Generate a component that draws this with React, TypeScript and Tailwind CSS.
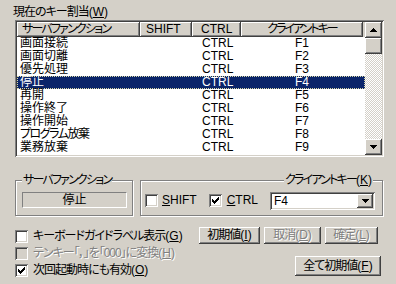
import React from "react";

const raised =
  "shadow-[inset_-1px_-1px_0_#404040,inset_1px_1px_0_#ffffff,inset_-2px_-2px_0_#808080,inset_2px_2px_0_#d4d0c8]";
const sunken =
  "shadow-[inset_1px_1px_0_#808080,inset_-1px_-1px_0_#ffffff,inset_2px_2px_0_#404040,inset_-2px_-2px_0_#d4d0c8]";
const etched = "border border-[#808080] shadow-[inset_1px_1px_0_#ffffff,1px_1px_0_#ffffff]";
const disabledText = "text-[#808080] [text-shadow:1px_1px_0_#ffffff]";

const rows: [string, string, string, boolean][] = [
  ["画面接続", "CTRL", "F1", false],
  ["画面切離", "CTRL", "F2", false],
  ["優先処理", "CTRL", "F3", false],
  ["停止", "CTRL", "F4", false],
  ["再開", "CTRL", "F5", false],
  ["操作終了", "CTRL", "F6", false],
  ["操作開始", "CTRL", "F7", false],
  ["プログラム放棄", "CTRL", "F8", true],
  ["業務放棄", "CTRL", "F9", false],
];

function Check({ checked, disabled }: { checked?: boolean; disabled?: boolean }) {
  return (
    <div
      className={`w-[13px] h-[13px] shrink-0 flex items-center justify-center ${sunken} ${
        disabled ? "bg-[#d4d0c8]" : "bg-white"
      }`}
    >
      {checked && (
        <svg width="7" height="7" viewBox="0 0 7 7" shapeRendering="crispEdges">
          <path
            d="M6 0h1v1H6zM5 1h2v1H5zM0 2h1v1H0zM4 2h3v1H4zM0 3h2v1H0zM3 3h3v1H3zM0 4h5v1H0zM1 5h3v1H1zM2 6h1v1H2z"
            fill="#000"
          />
        </svg>
      )}
    </div>
  );
}

function Arrow({ up }: { up?: boolean }) {
  return (
    <svg width="7" height="4" viewBox="0 0 7 4" shapeRendering="crispEdges">
      {up ? (
        <path d="M3 0h1v1H3zM2 1h3v1H2zM1 2h5v1H1zM0 3h7v1H0z" fill="#000" />
      ) : (
        <path d="M0 0h7v1H0zM1 1h5v1H1zM2 2h3v1H2zM3 3h1v1H3z" fill="#000" />
      )}
    </svg>
  );
}

function Mn({ k }: { k: string }) {
  return (
    <span className="tracking-normal">
      (<span className="underline">{k}</span>)
    </span>
  );
}

function Btn({
  children,
  w,
  h,
  disabled,
}: {
  children: React.ReactNode;
  w: string;
  h: string;
  disabled?: boolean;
}) {
  return (
    <div
      className={`${w} ${h} ${raised} flex items-center justify-center ${
        disabled ? disabledText : ""
      }`}
    >
      {children}
    </div>
  );
}

export default function App() {
  return (
    <div className="w-[396px] h-[284px] bg-[#d4d0c8] overflow-hidden text-black text-[12px] leading-[13px] tracking-[-1px] [font-family:'Liberation_Sans','Noto_Sans_CJK_JP',sans-serif] [font-feature-settings:'palt']">
      <div className="pl-[13px] pt-[6px] h-[20px]">
        現在のキー割当<Mn k="W" />
      </div>

      {/* list view */}
      <div className={`ml-[15px] w-[369px] h-[137px] p-[2px] flex ${sunken}`}>
        <div className="flex-1 bg-white flex flex-col overflow-hidden">
          <div className="flex h-[15px] shrink-0 bg-[#d4d0c8]">
            <div className={`w-[123px] pl-[5px] flex items-center tracking-[-1.8px] ${raised}`}>
              サーバファンクション
            </div>
            <div className={`w-[52px] pl-[6px] flex items-center tracking-normal ${raised}`}>SHIFT</div>
            <div className={`w-[49px] pl-[9px] flex items-center tracking-normal ${raised}`}>CTRL</div>
            <div className={`w-[122px] flex items-center justify-center tracking-[-2px] ${raised}`}>
              クライアントキー
            </div>
          </div>
          {rows.map(([name, mod, key, kana], i) => {
            const sel = i === 3;
            return (
              <div
                key={name}
                className={`flex h-[13px] shrink-0 items-center ${
                  sel ? "bg-[#0a246a] text-white outline-1 outline-dotted outline-[#d8d8a8] -outline-offset-1" : ""
                }`}
              >
                <div className={`w-[123px] pl-[3px] ${kana ? "tracking-[-1.5px]" : "tracking-normal"}`}>{name}</div>
                <div className="w-[52px]" />
                <div className="w-[49px] pl-[10px] tracking-normal">{mod}</div>
                <div className="w-[122px] text-center tracking-normal">{key}</div>
              </div>
            );
          })}
        </div>
        <div className="w-[17px] flex flex-col">
          <div className={`h-[16px] bg-[#d4d0c8] flex items-center justify-center ${raised}`}>
            <Arrow up />
          </div>
          <div className={`h-[16px] bg-[#d4d0c8] ${raised}`} />
          <div className="flex-1 bg-[conic-gradient(#ffffff_25%,#d4d0c8_0_50%,#ffffff_0_75%,#d4d0c8_0)] bg-[length:2px_2px]" />
          <div className={`h-[16px] bg-[#d4d0c8] flex items-center justify-center ${raised}`}>
            <Arrow />
          </div>
        </div>
      </div>

      {/* group boxes */}
      <div className="flex mt-[23px] ml-[15px] gap-[7px]">
        <div className={`relative w-[118px] h-[36px] ${etched}`}>
          <div className="absolute -top-[7px] left-[6px] bg-[#d4d0c8] px-[1px] tracking-[-1.8px]">
            サーバファンクション
          </div>
          <div className="mt-[11px] ml-[6px] w-[105px] h-[16px] border border-t-[#808080] border-l-[#808080] border-b-white border-r-white flex items-center justify-center tracking-normal">
            停止
          </div>
        </div>
        <div className={`relative w-[243px] h-[36px] flex items-start ${etched}`}>
          <div className="absolute -top-[7px] right-[9px] bg-[#d4d0c8] px-[1px] tracking-[-1.8px]">
            クライアントキー<Mn k="K" />
          </div>
          <div className="flex items-center mt-[13px] ml-[4px] tracking-normal">
            <Check />
            <span className="ml-[4px]">
              <span className="underline">S</span>HIFT
            </span>
          </div>
          <div className="flex items-center mt-[13px] ml-[12px] tracking-normal">
            <Check checked />
            <span className="ml-[5px]">
              <span className="underline">C</span>TRL
            </span>
          </div>
          <div className={`mt-[11px] ml-[12px] w-[105px] h-[18px] p-[2px] bg-white flex tracking-normal ${sunken}`}>
            <div className="flex-1 pl-[2px] flex items-center">F4</div>
            <div className={`w-[16px] bg-[#d4d0c8] flex items-center justify-center ${raised}`}>
              <Arrow />
            </div>
          </div>
        </div>
      </div>

      {/* bottom */}
      <div className="flex mt-[11px]">
        <div className="flex-1 ml-[15px] pt-[1px] flex flex-col">
          <div className="h-[17px] flex items-center">
            <Check />
            <span className="ml-[5px]">
              キーボードガイドラベル表示<Mn k="G" />
            </span>
          </div>
          <div className="h-[17px] flex items-center">
            <Check disabled />
            <span className={`ml-[5px] ${disabledText}`}>
              テンキー「，」を「000」に変換<Mn k="H" />
            </span>
          </div>
          <div className="h-[17px] flex items-center">
            <Check checked />
            <span className="ml-[5px]">
              次回起動時にも有効<Mn k="O" />
            </span>
          </div>
        </div>
        <div className="flex flex-col items-end">
          <div className="flex gap-[4px] mr-[18px]">
            <Btn w="w-[61px]" h="h-[17px]">
              初期値<Mn k="I" />
            </Btn>
            <Btn w="w-[57px]" h="h-[17px]" disabled>
              取消<Mn k="D" />
            </Btn>
            <Btn w="w-[53px]" h="h-[17px]" disabled>
              確定<Mn k="L" />
            </Btn>
          </div>
          <div className="mt-[12px] mr-[15px]">
            <Btn w="w-[86px]" h="h-[20px]">
              全て初期値<Mn k="F" />
            </Btn>
          </div>
        </div>
      </div>
    </div>
  );
}
